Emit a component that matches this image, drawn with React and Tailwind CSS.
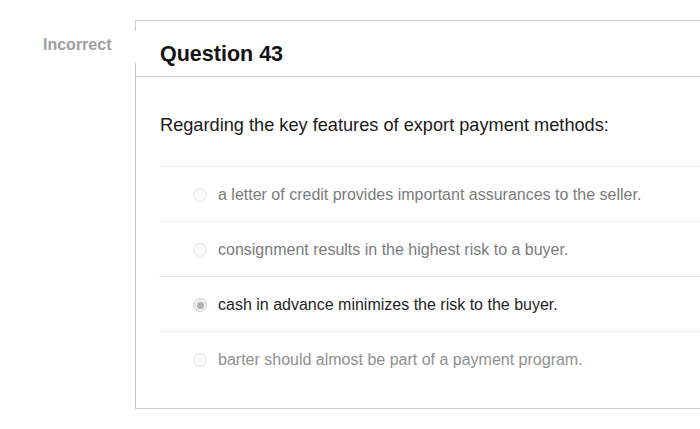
import React from "react";

const options = [
  { text: "a letter of credit provides important assurances to the seller.", color: "text-[#7b7b7b]", selected: false, line: "border-[#efefef]" },
  { text: "consignment results in the highest risk to a buyer.", color: "text-[#7b7b7b]", selected: false, line: "border-[#efefef]" },
  { text: "cash in advance minimizes the risk to the buyer.", color: "text-[#1e1e1e]", selected: true, line: "border-[#e2e2e2]" },
  { text: "barter should almost be part of a payment program.", color: "text-[#909090]", selected: false, line: "border-[#ececec]" },
];

function Radio({ selected }) {
  if (selected) {
    return (
      <div className="w-[14px] h-[14px] rounded-full border border-[#d0d0d0] bg-[#eeeeee] flex items-center justify-center shrink-0">
        <div className="w-[7px] h-[7px] rounded-full bg-[#b0b0b0]" />
      </div>
    );
  }
  return <div className="w-[14px] h-[14px] rounded-full border border-[#e3e3e3] bg-[#fafafa] shrink-0" />;
}

export default function App() {
  return (
    <div className="w-[700px] h-[429px] overflow-hidden bg-white pt-[20px] flex" style={{ fontFamily: '"Liberation Sans", Arial, Helvetica, sans-serif' }}>
      <div className="w-[135px] shrink-0 pl-[43px]">
        <div className="mt-[15px] text-[16px] leading-[20px] font-bold text-[#9e9e9e]">Incorrect</div>
      </div>
      <div className="relative w-[640px] shrink-0 h-[389px] border-t border-l border-b border-[#c9c9c9] flex flex-col">
        <div className="absolute left-[-1px] top-[10px] w-[1px] h-[32px] bg-white" />
        <div className="h-[56px] border-b border-[#c9c9c9] pl-[24px] pt-[21px]">
          <div className="text-[21.5px] leading-[24px] font-bold text-[#111]">Question 43</div>
        </div>
        <div className="pl-[23px] pt-[36px]">
          <div className="pl-[1px] text-[18.2px] leading-[24px] text-[#1a1a1a]">
            Regarding the key features of export payment methods:
          </div>
          <div className="mt-[29px]">
            {options.map((o, i) => (
              <div key={i} className={`h-[55px] border-t ${o.line} flex items-center pl-[34px] pt-[2px]`}>
                <Radio selected={o.selected} />
                <div className={`ml-[11px] text-[16px] leading-[20px] ${o.color}`}>{o.text}</div>
              </div>
            ))}
          </div>
        </div>
      </div>
    </div>
  );
}
